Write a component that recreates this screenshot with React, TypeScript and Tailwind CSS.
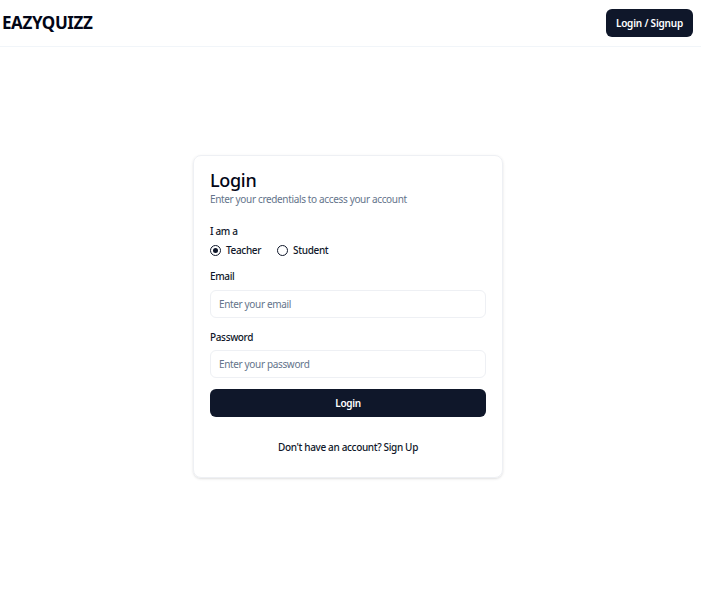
import React from "react";

export default function App() {
  return (
    <div className="min-h-[600px] bg-white text-[#0f172a]" style={{ fontFamily: '"Noto Sans", "Open Sans", sans-serif' }}>
      <header className="h-[47px] border-b border-[#f1f5f9] flex items-center justify-between pl-[2px] pr-[8px]">
        <div className="text-[17px] font-bold tracking-[-0.4px] text-[#020617]">EAZYQUIZZ</div>
        <button className="h-[28px] px-[10px] rounded-md bg-[#0f172a] text-white text-[10px] tracking-[-0.2px] font-semibold">Login / Signup</button>
      </header>
      <main className="flex justify-center pt-[108px] pr-[5px]">
        <div className="w-[310px] rounded-lg border border-[#eef0f4] shadow-sm px-[16px] pt-[13px] pb-[22px] tracking-[-0.35px]">
          <h1 className="text-[18px] leading-[22px] font-medium text-[#020617] tracking-[-0.3px]">Login</h1>
          <p className="text-[10px] leading-[14px] text-[#64748b] mt-[1px]">Enter your credentials to access your account</p>
          <div className="mt-[18px] text-[10px] font-medium leading-[14px]">I am a</div>
          <div className="mt-[5px] flex items-center gap-[16px] text-[10px] font-medium">
            <label className="flex items-center gap-[5px]">
              <span className="w-[11px] h-[11px] rounded-full border border-[#0f172a] flex items-center justify-center">
                <span className="w-[5px] h-[5px] rounded-full bg-[#0f172a]"></span>
              </span>
              Teacher
            </label>
            <label className="flex items-center gap-[5px]">
              <span className="w-[11px] h-[11px] rounded-full border border-[#0f172a]"></span>
              Student
            </label>
          </div>
          <div className="mt-[11px] text-[10px] font-medium leading-[14px]">Email</div>
          <div className="mt-[7px] h-[28px] rounded-md border border-[#eef0f4] flex items-center px-[8px] text-[10px] text-[#64748b]">Enter your email</div>
          <div className="mt-[12px] text-[10px] font-medium leading-[14px]">Password</div>
          <div className="mt-[6px] h-[28px] rounded-md border border-[#eef0f4] flex items-center px-[8px] text-[10px] text-[#64748b]">Enter your password</div>
          <button className="mt-[11px] w-full h-[28px] rounded-md bg-[#0f172a] text-white text-[10px] font-semibold">Login</button>
          <div className="mt-[23px] text-center text-[10px] font-medium">Don't have an account? Sign Up</div>
        </div>
      </main>
    </div>
  );
}
